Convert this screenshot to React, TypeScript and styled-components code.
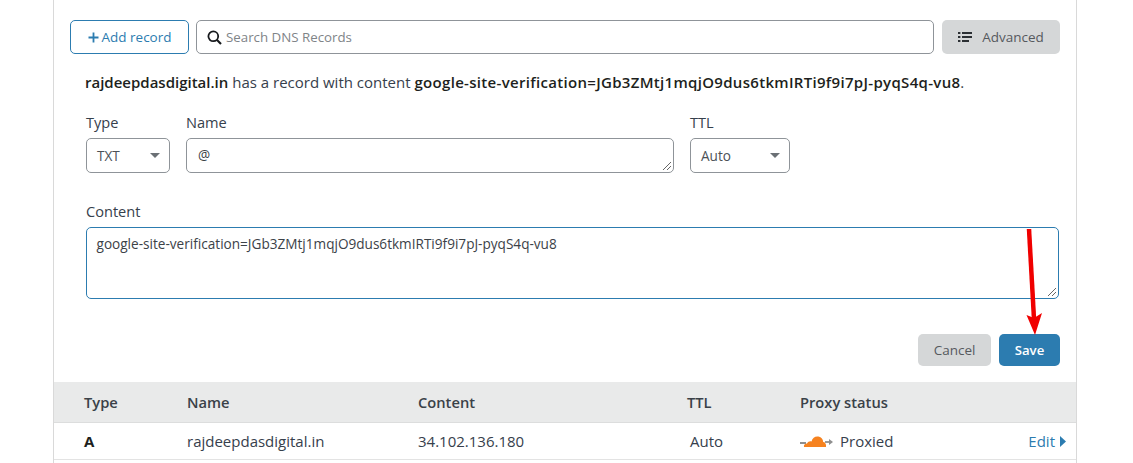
import React from "react";
import styled, { createGlobalStyle } from "styled-components";

const Global = createGlobalStyle`
  html, body { margin: 0; padding: 0; background: #fff; }
  body { font-family: "Open Sans", "Noto Sans", sans-serif; color: #313d4a; overflow: hidden; }
  * { box-sizing: border-box; }
`;

const Page = styled.div`
  width: 1133px;
  height: 463px;
  overflow: hidden;
  padding: 0 56px 0 53px;
`;
const Panel = styled.div`
  position: relative;
  width: 1024px;
  height: 463px;
  border-left: 1px solid #d9d9d9;
  border-right: 1px solid #d9d9d9;
`;
const Toolbar = styled.div`
  display: flex;
  padding: 20px 16px 0 16px;
  gap: 7px;
  height: 54px;
`;
const AddButton = styled.div`
  width: 119px;
  height: 34px;
  border: 1px solid #2c7cb0;
  border-radius: 5px;
  color: #2c7cb0;
  font-size: 13.5px;
  display: flex;
  align-items: center;
  justify-content: center;
  gap: 2px;
  padding-left: 1px;
`;
const Search = styled.div`
  width: 738px;
  height: 34px;
  border: 1px solid #8f9499;
  border-radius: 5px;
  display: flex;
  align-items: center;
  padding-left: 10px;
  gap: 4px;
  font-size: 13.3px;
  color: #808488;
`;
const GreyButton = styled.div<{ $w: number }>`
  width: ${(p) => p.$w}px;
  height: ${(p) => (p.$w > 100 ? 34 : 32)}px;
  margin-left: ${(p) => (p.$w > 100 ? 1 : 0)}px;
  background: #d5d7d8;
  border-radius: 5px;
  color: #55595e;
  font-size: 13.5px;
  display: flex;
  align-items: center;
  justify-content: center;
  gap: 10px;
`;
const Message = styled.div`
  margin: 17px 0 0 31px;
  height: 22px;
  font-size: 15px;
  line-height: 22px;
  white-space: nowrap;
  color: #36404c;
  b { font-weight: 600; color: #1d1f20; }
`;
const LongValue = styled.b`
  letter-spacing: 0.31px;
`;
const FieldRow = styled.div`
  display: flex;
  gap: 16px;
  margin: 19px 0 0 32px;
`;
const Field = styled.div<{ $w: number }>`
  width: ${(p) => p.$w}px;
`;
const Label = styled.div`
  font-size: 14.6px;
  line-height: 20px;
  height: 20px;
  margin-bottom: 6px;
  color: #36404c;
`;
const Select = styled.div`
  height: 35px;
  border: 1px solid #8f9499;
  border-radius: 5px;
  display: flex;
  align-items: center;
  justify-content: space-between;
  padding: 0 9px 0 10px;
  font-size: 13.6px;
  color: #4c5157;
`;
const Caret = styled.span`
  width: 0;
  height: 0;
  border-left: 5px solid transparent;
  border-right: 5px solid transparent;
  border-top: 5px solid #6b7075;
`;
const Input = styled.div<{ $h: number; $focus?: boolean }>`
  position: relative;
  height: ${(p) => p.$h}px;
  border: 1px solid ${(p) => (p.$focus ? "#2c7cb0" : "#8f9499")};
  border-radius: 5px;
  padding: ${(p) => (p.$focus ? "7px 9.5px" : "7px 11px")};
  font-size: 13.6px;
  line-height: 18px;
  color: #3c4248;
  white-space: nowrap;
`;
const Grip = styled.svg`
  position: absolute;
  right: 1px;
  bottom: 1px;
`;
const ContentField = styled.div`
  margin: 28px 0 0 32px;
  width: 973px;
`;
const Actions = styled.div`
  display: flex;
  justify-content: flex-end;
  gap: 8px;
  margin: 35px 16px 0 0;
`;
const SaveButton = styled.div`
  width: 61px;
  height: 32px;
  background: #2c7cb0;
  border-radius: 5px;
  color: #fff;
  font-size: 13.2px;
  font-weight: 600;
  display: flex;
  align-items: center;
  justify-content: center;
`;
const CancelButton = styled(GreyButton)`
  font-size: 13.5px;
`;
const columns = "103px 231px 269px 113px 1fr";
const TableHead = styled.div`
  display: grid;
  grid-template-columns: ${columns};
  margin-top: 16px;
  height: 41px;
  padding-left: 30px;
  align-items: center;
  background: #e9eaea;
  border-bottom: 1px solid #dcdddd;
  font-size: 14.7px;
  font-weight: 600;
  color: #3a4148;
`;
const TableRow = styled.div`
  display: grid;
  grid-template-columns: ${columns};
  height: 37px;
  padding-left: 30px;
  align-items: center;
  border-bottom: 1px solid #e3e3e3;
  font-size: 15px;
  color: #36404c;
`;
const Strong = styled.span`
  font-weight: 700;
  color: #1d1f20;
`;
const AutoCell = styled.span`
  padding-left: 3px;
`;
const ProxyCell = styled.div`
  display: flex;
  align-items: center;
  gap: 7px;
`;
const Edit = styled.div`
  position: absolute;
  right: 10px;
  top: 431px;
  display: flex;
  align-items: center;
  gap: 5px;
  color: #2c7cb0;
  font-size: 15px;
  line-height: 20px;
`;
const Arrow = styled.svg`
  position: absolute;
  left: 965px;
  top: 225px;
  pointer-events: none;
`;

const GripIcon = () => (
  <Grip width="11" height="11" viewBox="0 0 11 11">
    <path d="M2 10 L10 2 M6 10 L10 6" stroke="#666" strokeWidth="1" fill="none" />
  </Grip>
);

export default function App() {
  return (
    <Page>
      <Global />
      <Panel>
        <Toolbar>
          <AddButton>
            <svg width="11" height="11" viewBox="0 0 11 11">
              <path d="M5.5 0.5v10M0.5 5.5h10" stroke="#2c7cb0" strokeWidth="1.8" />
            </svg>
            Add record
          </AddButton>
          <Search>
            <svg width="15" height="15" viewBox="0 0 15 15" fill="none">
              <circle cx="6.3" cy="6.3" r="4.9" stroke="#16191c" strokeWidth="1.8" />
              <path d="M9.8 9.8L14 14" stroke="#16191c" strokeWidth="2.1" />
            </svg>
            Search DNS Records
          </Search>
          <GreyButton $w={118}>
            <svg width="14" height="12" viewBox="0 0 14 12" fill="#2b2f33">
              <rect x="0" y="1" width="2.4" height="2" />
              <rect x="0" y="5" width="2.4" height="2" />
              <rect x="0" y="9" width="2.4" height="2" />
              <rect x="4" y="1" width="10" height="2" />
              <rect x="4" y="5" width="10" height="2" />
              <rect x="4" y="9" width="7" height="2" />
            </svg>
            Advanced
          </GreyButton>
        </Toolbar>
        <Message>
          <b>rajdeepdasdigital.in</b> has a record with content{" "}
          <LongValue>google-site-verification=JGb3ZMtj1mqjO9dus6tkmIRTi9f9i7pJ-pyqS4q-vu8</LongValue>.
        </Message>
        <FieldRow>
          <Field $w={84}>
            <Label>Type</Label>
            <Select>
              TXT
              <Caret />
            </Select>
          </Field>
          <Field $w={488}>
            <Label>Name</Label>
            <Input $h={35}>
              @
              <GripIcon />
            </Input>
          </Field>
          <Field $w={100}>
            <Label>TTL</Label>
            <Select>
              Auto
              <Caret />
            </Select>
          </Field>
        </FieldRow>
        <ContentField>
          <Label>Content</Label>
          <Input $h={72} $focus>
            google-site-verification=JGb3ZMtj1mqjO9dus6tkmIRTi9f9i7pJ-pyqS4q-vu8
            <GripIcon />
          </Input>
        </ContentField>
        <Actions>
          <CancelButton $w={73}>Cancel</CancelButton>
          <SaveButton>Save</SaveButton>
        </Actions>
        <TableHead>
          <span>Type</span>
          <span>Name</span>
          <span>Content</span>
          <span>TTL</span>
          <span>Proxy status</span>
        </TableHead>
        <TableRow>
          <Strong>A</Strong>
          <span>rajdeepdasdigital.in</span>
          <span>34.102.136.180</span>
          <AutoCell>Auto</AutoCell>
          <ProxyCell>
            <svg width="33" height="14" viewBox="0 0 33 14">
              <path d="M0 9h6" stroke="#8f8f8f" strokeWidth="2" />
              <path d="M25 8h5" stroke="#8f8f8f" strokeWidth="1.8" />
              <path d="M29 5l4 3-4 3z" fill="#8f8f8f" />
              <path d="M4 13 C3.5 11 5 9.5 7 9.5 C8 7.5 10 7 11.5 7.5 C12.5 3.5 15.5 2 18.5 2.6 C21.5 3.2 23 5.5 23.2 8 C25 8 26.5 10 26 13 Z" fill="#f6821f" />
            </svg>
            Proxied
          </ProxyCell>
        </TableRow>
        <Edit>
          Edit
          <svg width="6" height="11" viewBox="0 0 6 11">
            <path d="M0 0l6 5.5-6 5.5z" fill="#2c7cb0" />
          </svg>
        </Edit>
        <Arrow width="24" height="112" viewBox="0 0 24 112">
          <path d="M10 4 L15 94" stroke="#f00000" strokeWidth="4.5" fill="none" />
          <path d="M7.5 90 L15 93 L23 88 L16 110 Z" fill="#f00000" />
        </Arrow>
      </Panel>
    </Page>
  );
}
